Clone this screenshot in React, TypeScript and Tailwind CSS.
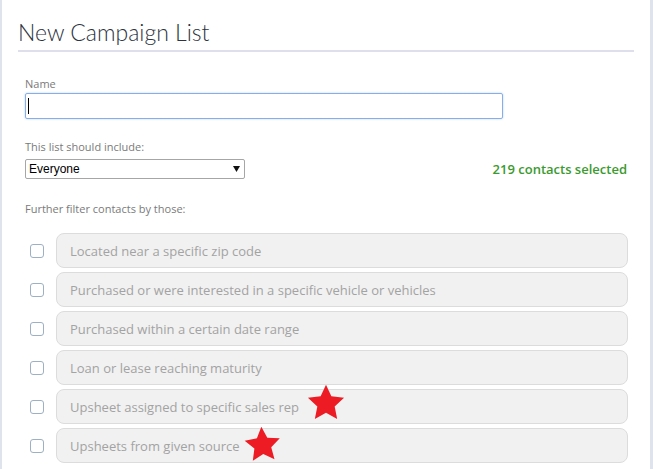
import React from "react";

const rows = [
  "Located near a specific zip code",
  "Purchased or were interested in a specific vehicle or vehicles",
  "Purchased within a certain date range",
  "Loan or lease reaching maturity",
  "Upsheet assigned to specific sales rep",
  "Upsheets from given source",
];

function starPoints(): string {
  const pts: string[] = [];
  for (let i = 0; i < 10; i++) {
    const r = i % 2 === 0 ? 50 : 24;
    const a = (Math.PI / 5) * i;
    const x = 50 + r * Math.sin(a);
    const y = 51 - r * Math.cos(a);
    pts.push(`${x.toFixed(2)},${y.toFixed(2)}`);
  }
  return pts.join(" ");
}

function Star({ className }: { className: string }) {
  return (
    <svg viewBox="0 0 100 93" className={className}>
      <polygon points={starPoints()} fill="#ed1c24" />
    </svg>
  );
}

export default function App() {
  return (
    <div className="w-[653px] h-[469px] bg-white border-l-2 border-r-[3px] border-[#dfe3ec] overflow-hidden font-['Open_Sans',sans-serif]">
      <div className="pl-[16px] pr-[16px]">
        <div className="h-[52px] border-b-2 border-[#dde0ea] pt-[19px]">
          <h1 className="font-['Lato',sans-serif] font-light text-[23px] leading-[26px] text-[#2d3340]">
            New Campaign List
          </h1>
        </div>
      </div>
      <div className="pl-[23px] w-[626px]">
        <div className="mt-[25px] text-[11px] leading-[14px] text-[#7a7a7a]">Name</div>
        <div className="mt-[2px] w-[478px] h-[26px] border border-[#86aee8] rounded-[2px] shadow-[0_0_2px_rgba(102,153,230,0.5)] flex items-center pl-[2px]">
          <div className="w-px h-[16px] bg-black" />
        </div>
        <div className="mt-[21px] text-[11px] leading-[14px] text-[#7a7a7a]">This list should include:</div>
        <div className="mt-[5px] flex items-center justify-between">
          <div className="w-[220px] h-[20px] border border-[#a6a6a6] rounded-[2px] flex items-center justify-between pl-[3px] pr-[4px] font-['Liberation_Sans',sans-serif] text-[12px] text-black">
            <span>Everyone</span>
            <svg width="7" height="6" viewBox="0 0 7 6">
              <polygon points="0,0 7,0 3.5,6" fill="#111" />
            </svg>
          </div>
          <div className="text-[13px] font-semibold text-[#3b9a2f] leading-[16px] pr-[1px]">219 contacts selected</div>
        </div>
        <div className="mt-[23px] text-[11px] leading-[14px] text-[#7a7a7a]">Further filter contacts by those:</div>
        <div className="mt-[17px] flex flex-col gap-[4px]">
          {rows.map((r, i) => (
            <div key={i} className="flex items-center">
              <div className="w-[31px] pl-[5px] flex">
                <div className="w-[14px] h-[14px] border border-[#9fb0c2] rounded-[3px] bg-white" />
              </div>
              <div className="relative flex-1 h-[35px] bg-[#f1f1f1] border border-[#dcdcdc] rounded-[8px] flex items-center pl-[13px] pt-[2px] text-[13px] text-[#a3a3a3]">
                {r}
                {i === 4 && <Star className="absolute left-[250px] top-[-6px] w-[38px] h-[36px]" />}
                {i === 5 && <Star className="absolute left-[187px] top-[-3px] w-[37px] h-[35px] rotate-[-4deg]" />}
              </div>
            </div>
          ))}
        </div>
      </div>
    </div>
  );
}
